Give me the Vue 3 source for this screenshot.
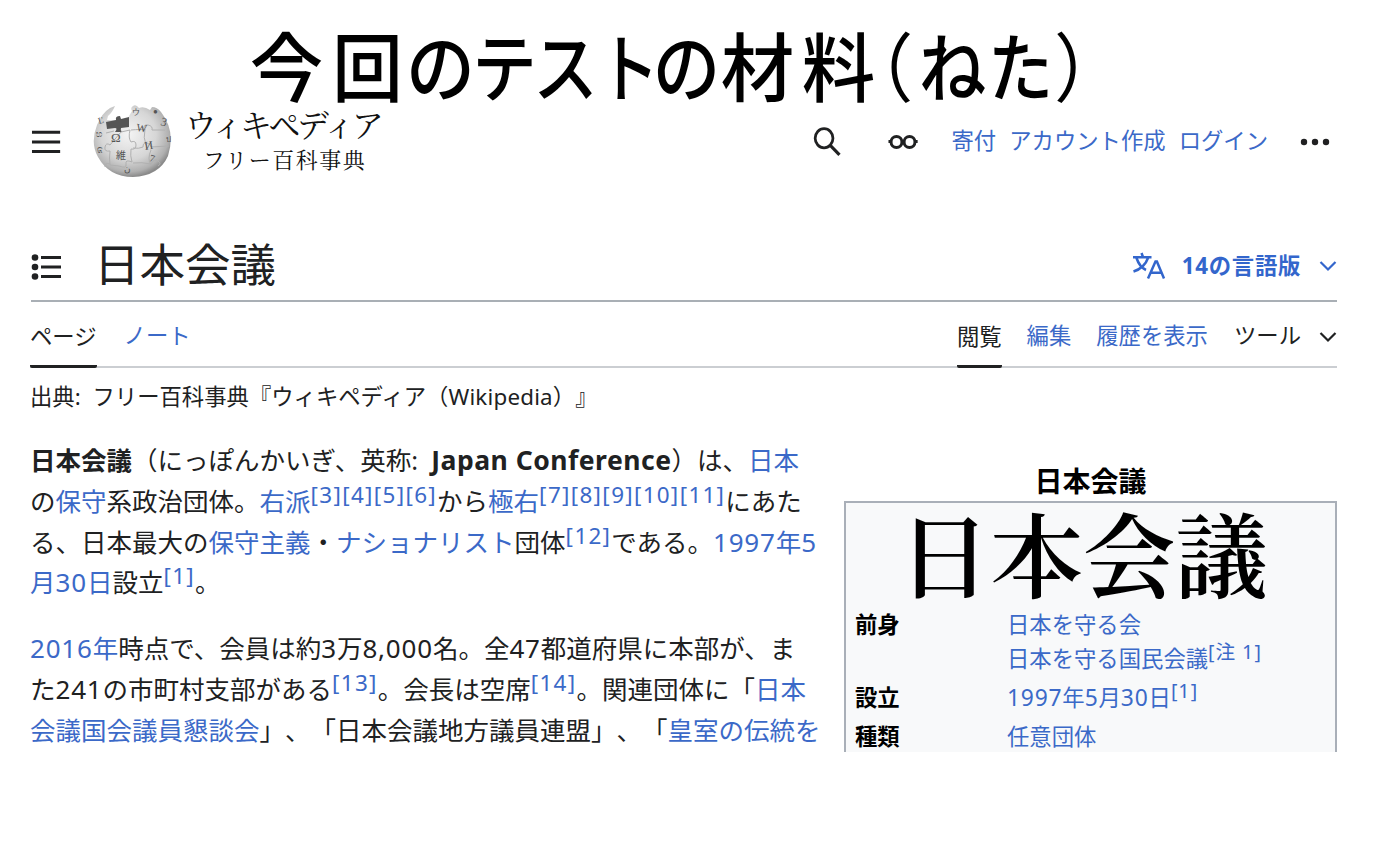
<script setup>
// [character, advance, horizontal scale, shift, weight]
const headline = [
  ['今', 81, 0.98, -1, 500], ['回', 81, 0.94, -1, 500], ['の', 65, 0.92, -1, 500], ['テ', 62, 0.86, -1, 500], ['ス', 62, 0.86, -2, 500], ['ト', 60, 0.82, 0, 500], ['の', 61, 0.9, -2, 500],
  ['材', 80, 0.98, -1, 500], ['料', 81, 0.98, -1, 500], ['（', 39, 0.95, -22, 400], ['ね', 68, 0.9, -1, 500], ['た', 68, 0.87, -1, 500], ['）', 50, 0.95, 9, 400],
]

const intro = [
  [['b', '日本会議'], ['', '（にっぽんかいぎ、英称: '], ['b', 'Japan Conference'], ['', '）は、'], ['a', '日本']],
  [['', 'の'], ['a', '保守'], ['', '系政治団体。'], ['a', '右派'], ['s', '[3][4][5][6]'], ['', 'から'], ['a', '極右'], ['s', '[7][8][9][10][11]'], ['', 'にあた']],
  [['', 'る、日本最大の'], ['a', '保守主義'], ['', '・'], ['a', 'ナショナリスト'], ['', '団体'], ['s', '[12]'], ['', 'である。'], ['a', '1997年5']],
  [['a', '月30日'], ['', '設立'], ['s', '[1]'], ['', '。']],
]
const status = [
  [['a', '2016年'], ['', '時点で、会員は約3万8,000名。全47都道府県に本部が、ま']],
  [['', 'た241の市町村支部がある'], ['s', '[13]'], ['', '。会長は空席'], ['s', '[14]'], ['', '。関連団体に「'], ['a', '日本']],
  [['a', '会議国会議員懇談会'], ['', '」、「日本会議地方議員連盟」、「'], ['a', '皇室の伝統を']],
]
const paragraphs = [intro, status]

const facts = [
  ['前身', [[['a', '日本を守る会']], [['a', '日本を守る国民会議'], ['s', '[注 1]']]]],
  ['設立', [[['a', '1997年5月30日'], ['s', '[1]']]]],
  ['種類', [[['a', '任意団体']]]],
]

const tags = { b: 'b', a: 'a', s: 'sup' }
const tagOf = (kind) => tags[kind] || 'span'
// Latin digits are tracked slightly wider than the kana around them.
const runs = (text) => text.split(/([0-9,]+)/).filter(Boolean).map((t) => ({ t, digit: /^[0-9,]+$/.test(t) }))
</script>

<template>
  <div class="page" lang="ja">
    <h1 class="headline">
      <span v-for="(c, i) in headline" :key="i" class="cell" :style="{ width: c[1] + 'px' }"><span :style="{ transform: `translateX(${c[3]}px) scaleX(${c[2]})`, fontWeight: c[4] }">{{ c[0] }}</span></span>
    </h1>

    <header class="top">
      <svg class="menu" width="30" height="26" viewBox="0 0 30 26"><path d="M1 3.2h28.500M1 13h28.500M1 22.600h28.500" stroke="#202122" stroke-width="3" /></svg>
      <svg class="globe" width="80" height="76" viewBox="0 0 80 76">
        <defs>
          <radialGradient id="ball" cx="45%" cy="40%" r="60%">
            <stop offset="0" stop-color="#f4f4f4" /><stop offset=".6" stop-color="#d6d6d6" /><stop offset=".88" stop-color="#b0b0b0" /><stop offset="1" stop-color="#8a8a8a" />
          </radialGradient>
        </defs>
        <path d="M17 5Q9 10 4 22Q-3 40 5 54Q16 74 40 74Q66 73 75 53Q83 28 68 9Q64 4 59 4L57 7Q51 3 46 5Q43 1 40 3Q37 5 39 8L36 13L35 17H14L15 13Q19 10 22 3Z" fill="url(#ball)" />
        <path d="M13 19l10-2q-1-4 4-4l1 3 8-2v10l-8 1q-1 2 1 4h-7q3-4 0-4l-8 1z" fill="#555" />
        <g fill="none" stroke="#b0b0b0" stroke-width="1">
          <path d="M13 30l8-2M28 29l9-2q-2 8 1 12q5-2 5 3t-5 4q-1 7 1 13q-7-3-6 2t-7 2l-9-1q-1-7 0-14q-6 1-5-4t5-2zM38 27q10-1 13 0q-1-6 4-5t4 5l13 0M40 45q6 1 10-1q0-5 4-4t4 4l18-1M17 61q-5-2-5 3M40 60q9-1 18 1q3-6 7-3t0 5M52 26q-2 9 1 16M58 47q-4 9 0 15" />
        </g>
        <g fill="#555" class="marks">
          <text x="18" y="39" font-size="13">Ω</text><text x="43" y="28" font-size="11" transform="rotate(8 43 28)">W</text><text x="52" y="47" font-size="12" transform="rotate(-8 52 47)">И</text><text x="23" y="56" font-size="10">維</text><text x="56" y="58" font-size="10" transform="rotate(15 56 58)">7</text><text x="67" y="22" font-size="12" transform="rotate(15 67 22)">3</text><text x="6" y="21" font-size="9" transform="rotate(-15 6 21)">Ľ</text><text x="3" y="34" font-size="8">හ</text><text x="4" y="50" font-size="8">ଜ</text><text x="39" y="12" font-size="8">ウ</text><text x="31" y="69" font-size="9">ن</text><text x="60" y="11" font-size="8">●</text><text x="73" y="39" font-size="8">ป</text>
        </g>
      </svg>
      <div class="brand"><div class="name">ウィキペディア</div><div class="tagline">フリー百科事典</div></div>
      <svg class="search" width="32" height="32" viewBox="0 0 32 32"><ellipse cx="12.2" cy="12.2" rx="9" ry="9.7" fill="none" stroke="#202122" stroke-width="2.8" /><path d="M18.500 19.500l9.300 9.500" stroke="#202122" stroke-width="3.200" /></svg>
      <svg class="glasses" width="32" height="18" viewBox="0 0 32 18"><g fill="none" stroke="#202122" stroke-width="3"><circle cx="9.600" cy="9" r="5.500" /><circle cx="22.800" cy="9" r="5.500" /><path d="M1.500 8.500h3M14.500 8.500h3M28 8.500h3" /></g></svg>
      <nav class="account"><a>寄付</a><a>アカウント作成</a><a>ログイン</a></nav>
      <svg class="more" width="30" height="8" viewBox="0 0 30 8"><g fill="#202122"><circle cx="4" cy="4" r="3.200" /><circle cx="15" cy="4" r="3.200" /><circle cx="26" cy="4" r="3.200" /></g></svg>
    </header>

    <div class="titlebar">
      <svg class="toc" width="30" height="28" viewBox="0 0 30 28"><g fill="#202122"><circle cx="4" cy="4.500" r="3.300" /><circle cx="4" cy="14" r="3.300" /><circle cx="4" cy="23.500" r="3.300" /></g><path d="M10 4.500h20M10 14h20M10 23.500h20" stroke="#202122" stroke-width="3" /></svg>
      <h2>日本会議</h2>
      <div class="langs">
        <svg width="34" height="28" viewBox="0 0 34 28"><g fill="none" stroke="#3366cc" stroke-width="2.500"><path d="M1 5.300h18.500M9.500 1l1.600 4.300M4.500 6q3 9 9.500 12M16 6Q12.500 16 1.500 19.500" /><path d="M16 26.500L23.500 9.500h1.400l7.100 17M19 20.800h10" /></g></svg>
        <b>14の言語版</b>
        <svg class="chev" width="18" height="12" viewBox="0 0 18 12"><path d="M1.500 2l7.500 7.500L16.500 2" fill="none" stroke="#3366cc" stroke-width="2.200" /></svg>
      </div>
    </div>

    <nav class="tabs">
      <span class="on">ページ</span><a>ノート</a>
      <span class="on right">閲覧</span><a class="edit">編集</a><a class="history">履歴を表示</a><span class="tools">ツール</span>
      <svg class="chev" width="18" height="12" viewBox="0 0 18 12"><path d="M1.500 2l7.500 7.500L16.500 2" fill="none" stroke="#202122" stroke-width="2.200" /></svg>
    </nav>
    <div class="source">出典: フリー百科事典『ウィキペディア（<span class="wiki">Wikipedia</span>）』</div>

    <main>
      <article>
        <p v-for="(p, pi) in paragraphs" :key="pi">
          <span v-for="(line, li) in p" :key="li" class="line"><component :is="tagOf(s[0])" v-for="(s, si) in line" :key="si"><span v-for="(r, ri) in runs(s[1])" :key="ri" :class="{ digit: r.digit, latin: r.t[0] === 'J' }">{{ r.t }}</span></component></span>
        </p>
      </article>
      <aside>
        <div class="caption">日本会議</div>
        <div class="box">
          <div class="wordmark">日本会議</div>
          <div v-for="f in facts" :key="f[0]" class="fact">
            <b>{{ f[0] }}</b>
            <div><div v-for="(l, li) in f[1]" :key="li" class="val"><component :is="tagOf(s[0])" v-for="(s, si) in l" :key="si"><span v-for="(r, ri) in runs(s[1])" :key="ri" :class="{ digit: r.digit }">{{ r.t }}</span></component></div></div>
          </div>
        </div>
      </aside>
    </main>
  </div>
</template>

<style>
body { background: #fff; }
</style>
<style scoped>
.page { width: 1376px; height: 752px; overflow: hidden; color: #202122; font-family: "Noto Sans", "Noto Sans CJK JP", sans-serif; font-size: 22.35px; font-weight: 400; display: flex; flex-direction: column; white-space: pre; text-spacing-trim: space-all; }
h1, h2, p { margin: 0; font-weight: 400; }
a, sup { color: #3b69c8; }
b { font-weight: 700; }
.headline { height: 105px; flex: none; display: flex; padding-left: 247px; box-sizing: border-box; color: #000; font: 500 75px/128px "Noto Sans CJK JP", sans-serif; }
.cell { display: flex; justify-content: center; flex: none; }
.top { height: 74px; flex: none; display: flex; align-items: center; padding: 0 46px 0 31px; }
.globe { margin: -2px 0 0 32px; flex: none; }
.marks { font-family: "Liberation Serif", "Noto Sans CJK JP", serif; }
.brand { width: 200px; margin-left: 12px; color: #111; font-family: "Noto Serif CJK JP", "Noto Sans CJK JP", serif; }
.name { font-size: 32px; line-height: 36px; letter-spacing: -3.4px; margin-top: -3px; }
.tagline { font-size: 22px; line-height: 36px; letter-spacing: 1.500px; margin-left: 18px; }
.search { margin-left: 430px; }
.glasses { margin-left: 43px; }
.account { display: flex; gap: 13px; margin: -6px 0 0 33px; flex: none; }
.more { margin-left: 32px; flex: none; }
.titlebar { height: 123px; flex: none; margin: 0 39px 0 31px; border-bottom: 2px solid #a9afb5; box-sizing: border-box; display: flex; padding-top: 51px; align-items: center; }
.toc { margin-top: 4px; }
h2 { font-size: 45.500px; line-height: 60px; margin: -2px 0 0 33px; }
.langs { margin-left: auto; display: flex; align-items: center; color: #3366cc; padding-top: 2px; }
.langs b { margin: -4px 0 0 16px; letter-spacing: .7px; }
.chev { margin-left: 18px; flex: none; }
.tabs { height: 66px; flex: none; margin: 0 39px 0 30px; box-sizing: border-box; border-bottom: 2px solid #cbced2; display: flex; align-items: center; line-height: 71px; }
.tabs > a { margin: 3px 0 0 27px; }
.tabs > .edit { margin-left: 25px; }
.tabs > .history { margin-left: 25px; }
.tabs .chev { margin-top: 6px; }
.on { height: 67px; box-sizing: border-box; border-bottom: 3px solid #202122; border-radius: 2px; }
.right { margin-left: auto; }
.tools { margin: 3px 0 0 26px; }
.source { height: 58px; flex: none; padding-left: 30px; line-height: 58px; word-spacing: 6px; }
.wiki { letter-spacing: .2px; }
main { display: flex; padding: 0 39px 0 30px; }
article { width: 814px; flex: none; font-size: 25.5px; padding-top: 14px; word-spacing: 6.500px; }
p { margin-bottom: 25px; }
.line { display: block; height: 40.75px; line-height: 40.75px; }
.digit { font-size: 1.02em; line-height: 0; letter-spacing: .8px; }
.latin { font-size: 1.04em; line-height: 0; letter-spacing: .5px; word-spacing: 0; }
sup { font-size: .88em; line-height: 0; vertical-align: 8px; letter-spacing: 1.400px; }
sup .digit { font-size: 1em; letter-spacing: 1.200px; }
aside { width: 493px; padding-top: 36px; }
aside sup { letter-spacing: .9px; }
.caption { text-align: center; font-size: 28px; line-height: 39px; font-weight: 700; color: #000; }
.box { height: 270px; border: 2px solid #a9afb8; background: #f8f9fa; box-sizing: border-box; padding: 0 9px; }
.wordmark { color: #000; font-family: "Noto Serif CJK JP", "Noto Sans CJK JP", serif; font-size: 92.500px; line-height: 97px; height: 105px; padding-right: 15px; text-align: center; font-weight: 600; }
.fact { display: grid; grid-template-columns: 152px 1fr; line-height: 34px; margin-bottom: 5px; }
.fact b { color: #000; }
.val { height: 34px; }
</style>
